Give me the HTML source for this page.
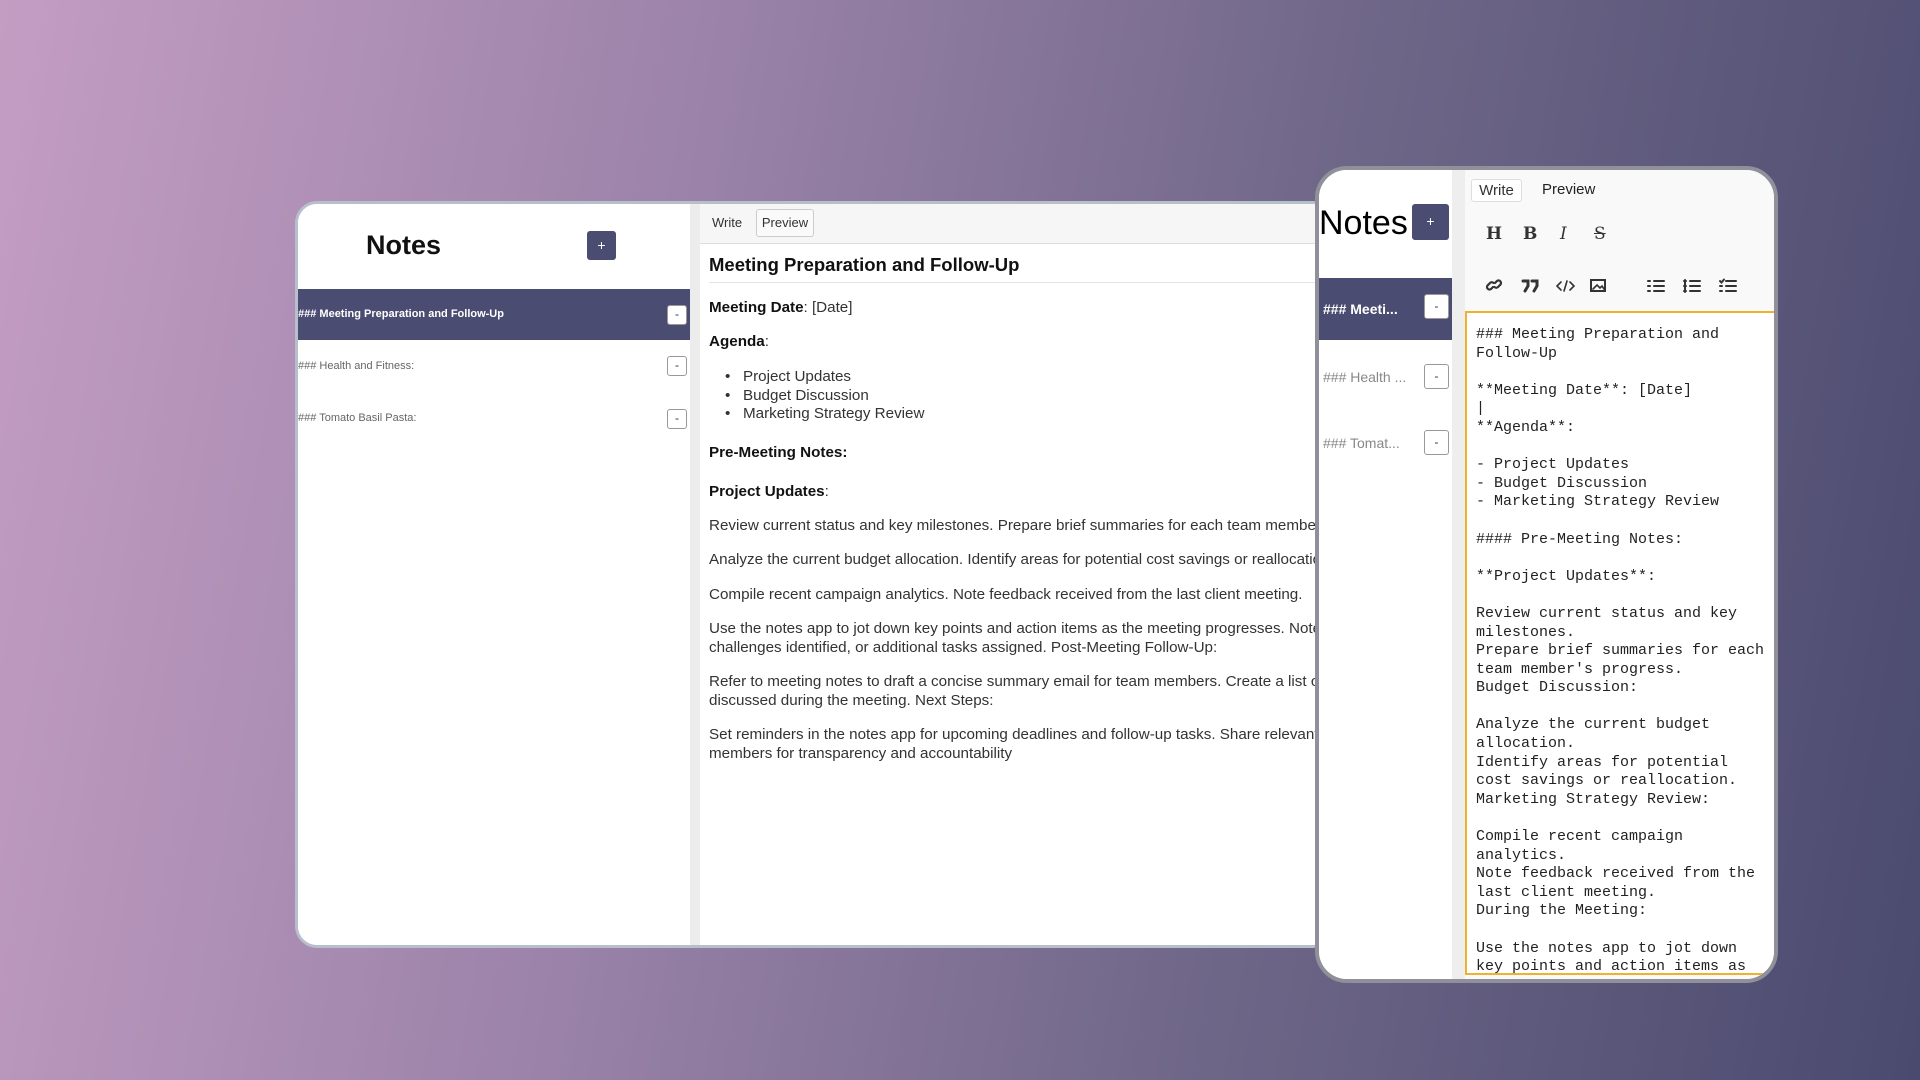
<!DOCTYPE html>
<html><head><meta charset="utf-8"><style>
*{box-sizing:border-box;margin:0;padding:0}
body{width:1920px;height:1080px;overflow:hidden;background:linear-gradient(100deg,#c49dc3 0%,#9a82a8 35%,#6f6788 65%,#4a4a6f 100%);font-family:"Liberation Sans",sans-serif;position:relative}
.card1{position:absolute;left:295px;top:201px;width:1040px;height:747px;background:#fff;border:3px solid #b7bfcb;border-radius:22px;overflow:hidden}
.side1{position:absolute;left:0;top:0;width:392px;height:100%;background:#fff}
.gut1{position:absolute;left:392px;top:0;width:10px;height:100%;background:#ececec}
.ed1{position:absolute;left:402px;top:0;right:0;height:100%}
.title{position:absolute;font-weight:bold;color:#111}
.plus{position:absolute;background:#4b4c72;color:#fff;border-radius:3px;text-align:center;font-size:14px}
.row{position:absolute;left:0;width:393px;font-size:11px;color:#666}
.sel{background:#4b4c72;color:#fff;font-weight:bold}
.minus{position:absolute;width:20px;height:20px;border:1px solid #999;border-radius:3px;background:#fff;color:#333;font-size:12px;text-align:center;line-height:17px}
.tabs{position:absolute;left:0;top:0;right:0;height:40px;background:#f6f6f6;border-bottom:1px solid #ddd;font-size:13px;color:#333}
.pv{position:absolute;left:9px;top:48px;right:0;font-size:15.2px;color:#333;white-space:nowrap}
.pv p{position:absolute;left:0;line-height:18.5px}
.pv b{color:#111}
.card2{position:absolute;left:1315px;top:166px;width:463px;height:817px;background:#fff;border:4px solid #8f909a;border-radius:32px;overflow:hidden}
.side2{position:absolute;left:0;top:0;width:133px;height:100%;background:#fff}
.gut2{position:absolute;left:133px;top:0;width:13px;height:100%;background:#eeeeee}
.ed2{position:absolute;left:146px;top:0;right:0;height:100%;background:#f9f9f9}
.tb{position:absolute;font-family:"DejaVu Serif",serif;font-weight:bold;font-size:17px;color:#333}
.ta{position:absolute;left:0;top:141px;width:312px;height:664px;border:2px solid #f0b030;border-right:none;background:#fff;overflow:hidden}
.ta pre{font-family:"Liberation Mono",monospace;font-size:15px;line-height:18.6px;color:#222;padding:13px 0 0 9px}
</style></head><body>
<div class="card1">
 <div class="side1">
  <div class="title" style="left:68px;top:26px;font-size:27px">Notes</div>
  <div class="plus" style="left:289px;top:27px;width:29px;height:29px;line-height:28px">+</div>
  <div class="row sel" style="top:85px;height:51px;line-height:51px">### Meeting Preparation and Follow-Up</div>
  <div class="minus" style="left:369px;top:101px">-</div>
  <div class="row" style="top:152px;line-height:20px">### Health and Fitness:</div>
  <div class="minus" style="left:369px;top:152px">-</div>
  <div class="row" style="top:204px;line-height:20px">### Tomato Basil Pasta:</div>
  <div class="minus" style="left:369px;top:205px">-</div>
 </div>
 <div class="gut1"></div>
 <div class="ed1">
  <div class="tabs">
   <span style="position:absolute;left:12px;top:11px">Write</span>
   <span style="position:absolute;left:56px;top:5px;height:28px;width:58px;border:1px solid #ccc;border-radius:3px;background:#fafafa;line-height:26px;text-align:center">Preview</span>
  </div>
  <div style="position:absolute;left:9px;top:50px;font-size:18.5px;font-weight:bold;color:#111">Meeting Preparation and Follow-Up</div>
  <div style="position:absolute;left:9px;top:78px;right:0;border-top:1px solid #e4e4e4"></div>
  <div class="pv">
   <p style="top:47px"><b>Meeting Date</b>: [Date]</p>
   <p style="top:81px"><b>Agenda</b>:</p>
   <p style="top:116px;left:16px">•&nbsp;&nbsp; Project Updates<br>•&nbsp;&nbsp; Budget Discussion<br>•&nbsp;&nbsp; Marketing Strategy Review</p>
   <p style="top:192px"><b>Pre-Meeting Notes:</b></p>
   <p style="top:231px"><b>Project Updates</b>:</p>
   <p style="top:265px">Review current status and key milestones. Prepare brief summaries for each team member's progress.</p>
   <p style="top:299px">Analyze the current budget allocation. Identify areas for potential cost savings or reallocation.</p>
   <p style="top:334px">Compile recent campaign analytics. Note feedback received from the last client meeting.</p>
   <p style="top:368px">Use the notes app to jot down key points and action items as the meeting progresses. Note decisions made,<br>challenges identified, or additional tasks assigned. Post-Meeting Follow-Up:</p>
   <p style="top:421px">Refer to meeting notes to draft a concise summary email for team members. Create a list of action items<br>discussed during the meeting. Next Steps:</p>
   <p style="top:474px">Set reminders in the notes app for upcoming deadlines and follow-up tasks. Share relevant notes with team<br>members for transparency and accountability</p>
  </div>
 </div>
</div>
<div class="card2">
 <div class="side2">
  <div class="title" style="left:0;top:34px;font-size:34px;font-weight:normal;color:#000">Notes</div>
  <div class="plus" style="left:93px;top:34px;width:37px;height:36px;line-height:35px">+</div>
  <div class="row sel" style="top:108px;width:133px;height:62px;line-height:62px;font-size:14px;padding-left:4px">### Meeti...</div>
  <div class="minus" style="left:105px;top:124px;width:25px;height:25px;line-height:22px">-</div>
  <div class="row" style="top:197px;width:110px;font-size:14px;padding-left:4px;line-height:20px;color:#888">### Health ...</div>
  <div class="minus" style="left:105px;top:194px;width:25px;height:25px;line-height:22px">-</div>
  <div class="row" style="top:263px;width:110px;font-size:14px;padding-left:4px;line-height:20px;color:#888">### Tomat...</div>
  <div class="minus" style="left:105px;top:260px;width:25px;height:25px;line-height:22px">-</div>
 </div>
 <div class="gut2"></div>
 <div class="ed2">
  <span style="position:absolute;left:6px;top:9px;width:51px;height:23px;border:1px solid #ddd;border-radius:3px;background:#fff;text-align:center;line-height:21px;font-size:15px;color:#333">Write</span>
  <span style="position:absolute;left:77px;top:11px;font-size:15px;color:#222">Preview</span>
  <span class="tb" style="left:21px;top:54px">H</span>
  <span class="tb" style="left:58px;top:54px">B</span>
  <span class="tb" style="left:95px;top:54px;font-style:italic;font-weight:normal">I</span>
  <span class="tb" style="left:129px;top:54px;text-decoration:line-through;font-weight:normal">S</span>
  <svg style="position:absolute;left:20px;top:106px" width="260" height="20" viewBox="0 0 260 20" fill="none" stroke="#333" stroke-width="2.2" stroke-linecap="round">
   <path d="M8 11l-2 2a2.5 2.5 0 01-3.5-3.5l2.5-2.5a2.5 2.5 0 013.5 0M10 7l2-2a2.5 2.5 0 013.5 3.5l-2.5 2.5a2.5 2.5 0 01-3.5 0"/>
   <path d="M38 5h5v5l-3 5M47 5h5v5l-3 5" stroke-width="3"/>
   <path d="M76 6l-4 4 4 4M85 6l4 4-4 4M82 5l-3 10" stroke-width="1.6"/>
   <rect x="106" y="4" width="14" height="11" stroke-width="2"/><path d="M108 13l4-4 3 3 2-2 2 3" stroke-width="1.6"/>
   <path d="M163 5h2M169 5h10M163 10h2M169 10h10M163 15h2M169 15h10" stroke-width="2"/>
   <path d="M199 5h2M205 5h10M199 10h2M205 10h10M199 15h2M205 15h10M200 4v12" stroke-width="2"/>
   <path d="M235 5l1.5 1.5 2.5-3M241 5h10M235 10h2M241 10h10M235 15h2M241 15h10" stroke-width="2"/>
  </svg>
  <div class="ta"><pre>### Meeting Preparation and
Follow-Up

**Meeting Date**: [Date]
|
**Agenda**:

- Project Updates
- Budget Discussion
- Marketing Strategy Review

#### Pre-Meeting Notes:

**Project Updates**:

Review current status and key
milestones.
Prepare brief summaries for each
team member's progress.
Budget Discussion:

Analyze the current budget
allocation.
Identify areas for potential
cost savings or reallocation.
Marketing Strategy Review:

Compile recent campaign
analytics.
Note feedback received from the
last client meeting.
During the Meeting:

Use the notes app to jot down
key points and action items as</pre></div>
 </div>
</div>
</body></html>
